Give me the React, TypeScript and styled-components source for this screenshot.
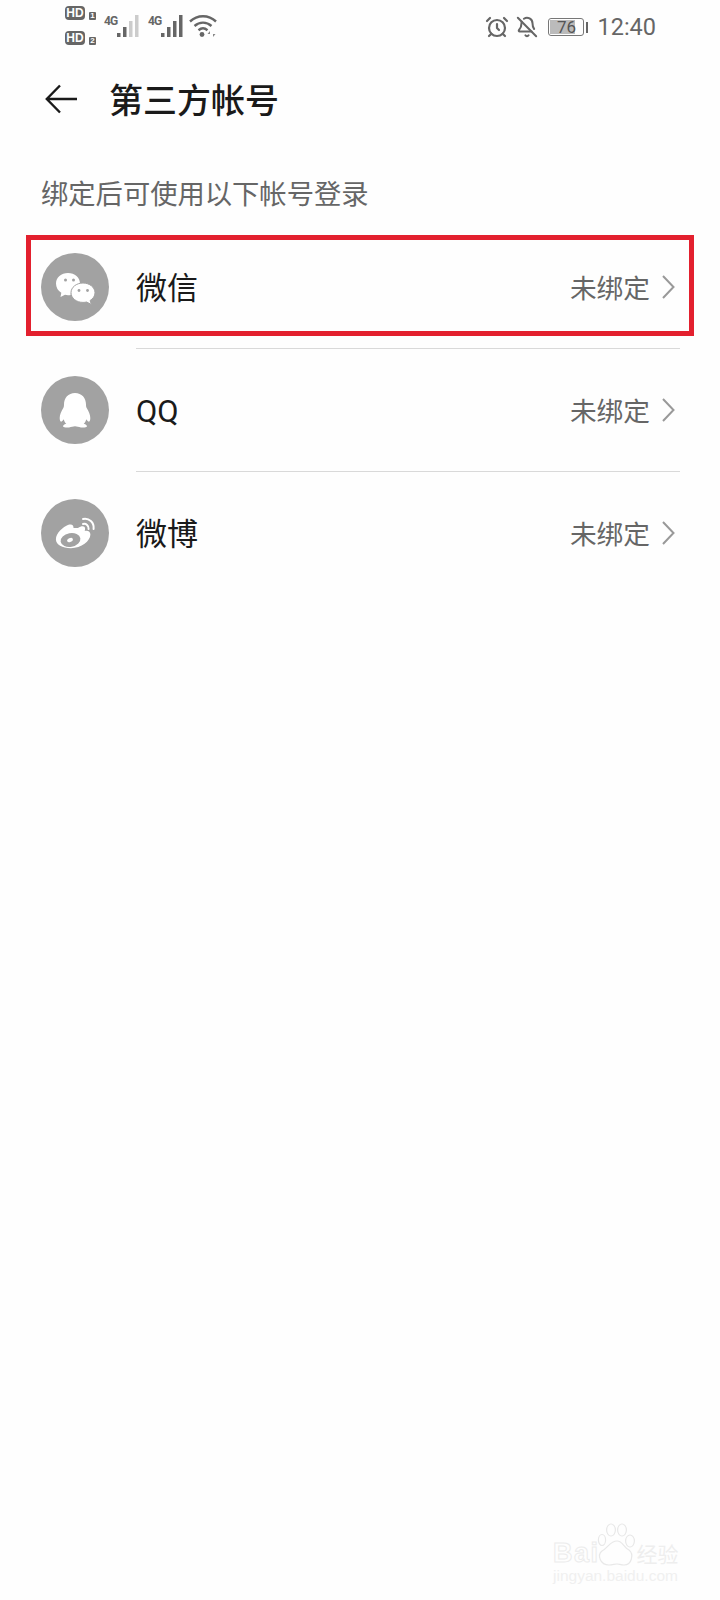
import * as React from 'react'
import styled, { createGlobalStyle } from 'styled-components'
import { AlarmClock, BellOff } from 'lucide-react'

const Global = createGlobalStyle`
    html, body {
        margin: 0;
        padding: 0;
        background: #fefefe;
    }
    body {
        font-family: Roboto, "Noto Sans CJK SC", sans-serif;
    }
`

const WechatIcon = () => (
    <svg width="68" height="68" viewBox="0 0 68 68">
        <path d="M27 20c6.800 0 12 4.600 12 10.400 0 1-.2 2-.5 2.900-5.400.6-9 4.200-8.800 8.600-1 .2-1.800.3-2.700.3-1 0-2-.1-3-.4L19.500 44l.8-4.300C17 37.800 15 34.400 15 30.400 15 24.600 20.200 20 27 20z" fill="#fff" />
        <path d="M42 30c6.600 0 12 4.400 12 9.700 0 3.200-1.900 6-4.900 7.800l1.300 4-4.800-2.500c-1.100.3-2.300.4-3.600.4-6.600 0-12-4.300-12-9.700S35.400 30 42 30z" fill="#fff" stroke="#a2a2a2" strokeWidth="1" />
        <circle cx="24.500" cy="27" r="1.500" fill="#a2a2a2" />
        <circle cx="32.500" cy="27" r="1.500" fill="#a2a2a2" />
        <circle cx="38" cy="37.500" r="1.400" fill="#a2a2a2" />
        <circle cx="46.500" cy="37.500" r="1.400" fill="#a2a2a2" />
    </svg>
)

const QQIcon = () => (
    <svg width="68" height="68" viewBox="0 0 68 68">
        <path d="M34 17c6.800 0 11 5 11 11.500 0 1.500.2 2.500.7 3.500 2 3.300 3.600 6.700 3.600 10 0 1.800-.4 3.200-1 3.600-.8.300-2-.8-3-2.400-.4 1.800-1.300 3.400-2.600 4.600 2.400.8 3.400 1.700 3.200 2.600-.4 1-3 1.300-6 1-2.200-.2-4-1.100-5.900-1.100s-3.700.9-5.900 1.100c-3 .3-5.600 0-6-1-.2-.9.800-1.800 3.200-2.600-1.300-1.200-2.200-2.800-2.600-4.600-1 1.600-2.200 2.700-3 2.400-.6-.4-1-1.800-1-3.600 0-3.300 1.600-6.700 3.600-10 .5-1 .7-2 .7-3.500C23 22 27.200 17 34 17z" fill="#fff" />
    </svg>
)

const WeiboIcon = () => (
    <svg width="68" height="68" viewBox="0 0 68 68">
        <path d="M37 29c2.500-1.700 5-2.300 6.300-1.200 1 .9 1 2.500.4 4.200 3-.8 5.700.3 5.700 3.600 0 6.500-9 13.600-19.500 13.600-8.500 0-15-3.600-15-9 0-5.700 7-12.500 12.600-14.400 3.500-1.100 5.300.6 5 3.300 1.400-.3 3-.1 4.500-.1z" fill="#fff" />
        <ellipse cx="29.500" cy="41" rx="10" ry="6.800" fill="#a2a2a2" transform="rotate(-10 29.500 41)" />
        <ellipse cx="29" cy="41" rx="3" ry="2" fill="#fff" transform="rotate(-25 29 41)" />
        <path d="M42 25c3-.8 6 1.500 5.600 5" fill="none" stroke="#fff" strokeWidth="2" strokeLinecap="round" />
        <path d="M42 20c6-1.300 11.400 3.400 10.600 10" fill="none" stroke="#fff" strokeWidth="2" strokeLinecap="round" />
    </svg>
)

const SignalIcon = ({ lit }: { lit: number }) => (
    <svg width="24" height="24" viewBox="0 0 24 24">
        {[
            { x: 1, h: 4 },
            { x: 7, h: 10 },
            { x: 13, h: 16 },
            { x: 19, h: 22 },
        ].map((b, i) => (
            <rect key={b.x} x={b.x} y={23 - b.h} width="3.500" height={b.h} fill={i < lit ? '#666' : '#ccc'} />
        ))}
    </svg>
)

const WifiIcon = () => (
    <svg width="28" height="24" viewBox="0 0 28 24">
        <path d="M1 7.500C8.500 .5 19.500 .5 27 7.500" fill="none" stroke="#666" strokeWidth="2.400" />
        <path d="M5.500 12C10.500 7.500 17.500 7.500 22.500 12" fill="none" stroke="#666" strokeWidth="2.400" />
        <path d="M9.500 16.200c2.800-2.300 6.200-2.300 9 0" fill="none" stroke="#666" strokeWidth="2.400" />
        <circle cx="13" cy="20.500" r="2.400" fill="#666" />
        <path d="M21 23v-6l-2.500 3h2.500zM24 17v6l2.500-3H24z" fill="#888" />
    </svg>
)

const BackIcon = () => (
    <svg width="32" height="30" viewBox="0 0 32 30">
        <path d="M15 1.500L1.800 15 15 28.500M2 15h30" fill="none" stroke="#1a1a1a" strokeWidth="2.400" />
    </svg>
)

const Chevron = () => (
    <svg width="13" height="24" viewBox="0 0 13 24">
        <path d="M1 1l10.500 11L1 23" fill="none" stroke="#999" strokeWidth="2" />
    </svg>
)

const PawIcon = () => (
    <svg width="40" height="44" viewBox="0 0 40 44">
        <g fill="none" stroke="#e8e8e8" strokeWidth="1.200">
            <ellipse cx="5" cy="17" rx="3.600" ry="5.500" />
            <ellipse cx="14" cy="7" rx="4.400" ry="6" />
            <ellipse cx="25" cy="7" rx="4.400" ry="6" />
            <ellipse cx="33" cy="18" rx="4.400" ry="6" />
            <path d="M20 18c6 0 6 6 12 9 5 4 3 15-5 15-3 0-5-1-7-1s-5 1-8 1C3 42 0 32 5 28c6-3 8-10 15-10z" />
        </g>
    </svg>
)

const accounts = [
    { name: '微信', icon: <WechatIcon />, marked: true },
    { name: 'QQ', icon: <QQIcon />, marked: false },
    { name: '微博', icon: <WeiboIcon />, marked: false },
]

const App = () => {
    return (
        <Page>
            <Global />
            <StatusBar>
                <SimColumn>
                    <HdRow><HdBadge>HD</HdBadge><SimNo>1</SimNo></HdRow>
                    <HdRow><HdBadge>HD</HdBadge><SimNo>2</SimNo></HdRow>
                </SimColumn>
                <Network>
                    <NetLabel>4G</NetLabel>
                    <SignalIcon lit={2} />
                </Network>
                <Network>
                    <NetLabel>4G</NetLabel>
                    <SignalIcon lit={4} />
                </Network>
                <WifiBox><WifiIcon /></WifiBox>
                <StatusRight>
                    <AlarmClock size={24} color="#666" strokeWidth={2.200} />
                    <BellOffBox><BellOff size={22} color="#666" strokeWidth={2.200} /></BellOffBox>
                    <Battery>
                        <BatteryShell>
                            <BatteryFill style={{ width: '76%' }} />
                            <BatteryText>76</BatteryText>
                        </BatteryShell>
                        <BatteryTip />
                    </Battery>
                    <Clock>12:40</Clock>
                </StatusRight>
            </StatusBar>

            <NavBar>
                <BackIcon />
                <Title>第三方帐号</Title>
            </NavBar>

            <SectionLabel>绑定后可使用以下帐号登录</SectionLabel>

            <List>
                {accounts.map((a, i) => (
                    <Row key={a.name}>
                        <Avatar>{a.icon}</Avatar>
                        <RowBody last={i === accounts.length - 1}>
                            <Name>{a.name}</Name>
                            <Status>未绑定</Status>
                            <Chevron />
                        </RowBody>
                        {a.marked && <Highlight />}
                    </Row>
                ))}
            </List>

            <Watermark>
                <MarkTop>
                    <MarkBai>Bai</MarkBai>
                    <PawIcon />
                    <MarkCn>经验</MarkCn>
                </MarkTop>
                <MarkUrl>jingyan.baidu.com</MarkUrl>
            </Watermark>
        </Page>
    )
}

const Page = styled.div`
    position: relative;
    width: 720px;
    height: 1600px;
    overflow: hidden;
    background: #fefefe;
`

const StatusBar = styled.div`
    display: flex;
    align-items: center;
    height: 54px;
    padding: 0 64px 0 65px;
    box-sizing: border-box;
`

const SimColumn = styled.div`
    display: flex;
    flex-direction: column;
    gap: 11px;
    margin-top: -4px;
`

const HdRow = styled.div`
    display: flex;
    align-items: flex-end;
    gap: 4px;
`

const HdBadge = styled.span`
    display: block;
    width: 20px;
    height: 14px;
    border-radius: 4px;
    background: #666;
    color: #fefefe;
    font: 700 12px/14px "Liberation Sans", sans-serif;
    text-align: center;
`

const SimNo = styled.span`
    display: block;
    width: 7px;
    height: 8px;
    border-radius: 1px;
    background: #666;
    color: #fefefe;
    font: 700 8px/8px "Liberation Sans", sans-serif;
    text-align: center;
`

const Network = styled.div`
    display: flex;
    align-items: flex-start;
    margin-left: 8px;
    margin-top: -3px;
`

const NetLabel = styled.span`
    flex: none;
    width: 12px;
    font: 700 12px/14px Roboto, sans-serif;
    letter-spacing: -1px;
    color: #666;
    white-space: nowrap;
`

const WifiBox = styled.div`
    display: flex;
    margin-left: 5px;
    margin-top: -3px;
`

const StatusRight = styled.div`
    display: flex;
    align-items: center;
    margin-left: auto;
`

const BellOffBox = styled.div`
    display: flex;
    margin-left: 7px;
`

const Battery = styled.div`
    display: flex;
    align-items: center;
    gap: 2px;
    margin-left: 10px;
`

const BatteryShell = styled.div`
    position: relative;
    width: 36px;
    height: 18px;
    box-sizing: border-box;
    border: 1px solid #777;
    border-radius: 3px;
    padding: 1px;
`

const BatteryFill = styled.div`
    height: 100%;
    background: #bbb;
`

const BatteryText = styled.span`
    position: absolute;
    inset: 0;
    font: 400 17px/16px Roboto, sans-serif;
    color: #555;
    text-align: center;
`

const BatteryTip = styled.div`
    width: 2px;
    height: 11px;
    background: #666;
`

const Clock = styled.span`
    margin-left: 9px;
    font: 400 23.500px/30px Roboto, sans-serif;
    color: #666;
`

const NavBar = styled.div`
    display: flex;
    align-items: center;
    gap: 32px;
    height: 94px;
    box-sizing: border-box;
    padding: 0 0 4px 45px;
`

const Title = styled.h1`
    margin: 0;
    font: 500 34px/44px "Noto Sans CJK SC", sans-serif;
    color: #1a1a1a;
`

const SectionLabel = styled.div`
    padding: 26px 0 16px 41px;
    font: 400 27.300px/36px "Noto Sans CJK SC", sans-serif;
    color: #666;
`

const List = styled.div`
    display: flex;
    flex-direction: column;
`

const Row = styled.div`
    position: relative;
    display: flex;
    height: 123px;
    padding: 0 40px 0 41px;
`

const Avatar = styled.div`
    flex: none;
    width: 68px;
    height: 68px;
    margin-top: 27px;
    border-radius: 50%;
    background: #a2a2a2;
`

const RowBody = styled.div<{ last: boolean }>`
    flex: 1;
    display: flex;
    align-items: center;
    margin-left: 27px;
    border-bottom: 1px solid ${(p) => (p.last ? 'transparent' : '#d9d9d9')};
    padding-right: 5px;
`

const Name = styled.span`
    flex: 1;
    padding-top: 4px;
    font: 400 31px/40px Roboto, "Noto Sans CJK SC", sans-serif;
    color: #1a1a1a;
`

const Status = styled.span`
    margin-right: 12px;
    font: 400 26.700px/36px "Noto Sans CJK SC", sans-serif;
    color: #666;
`

const Highlight = styled.div`
    position: absolute;
    left: 26px;
    top: 9px;
    width: 668px;
    height: 101px;
    box-sizing: border-box;
    border: 5px solid #e3202e;
    pointer-events: none;
`

const Watermark = styled.div`
    position: absolute;
    left: 553px;
    top: 1523px;
    width: 130px;
`

const MarkTop = styled.div`
    display: flex;
    align-items: flex-end;
`

const MarkBai = styled.span`
    font: 700 27px/28px "Liberation Sans", sans-serif;
    letter-spacing: 1.500px;
    color: #fefefe;
    -webkit-text-stroke: 1px #ececec;
    margin-right: -3px;
`

const MarkCn = styled.span`
    font: 400 21px/28px "Noto Sans CJK SC", sans-serif;
    color: #eeeeee;
`

const MarkUrl = styled.div`
    font: 400 15.500px/18px "Liberation Sans", sans-serif;
    color: #f0f0f0;
    white-space: nowrap;
`

export default App
